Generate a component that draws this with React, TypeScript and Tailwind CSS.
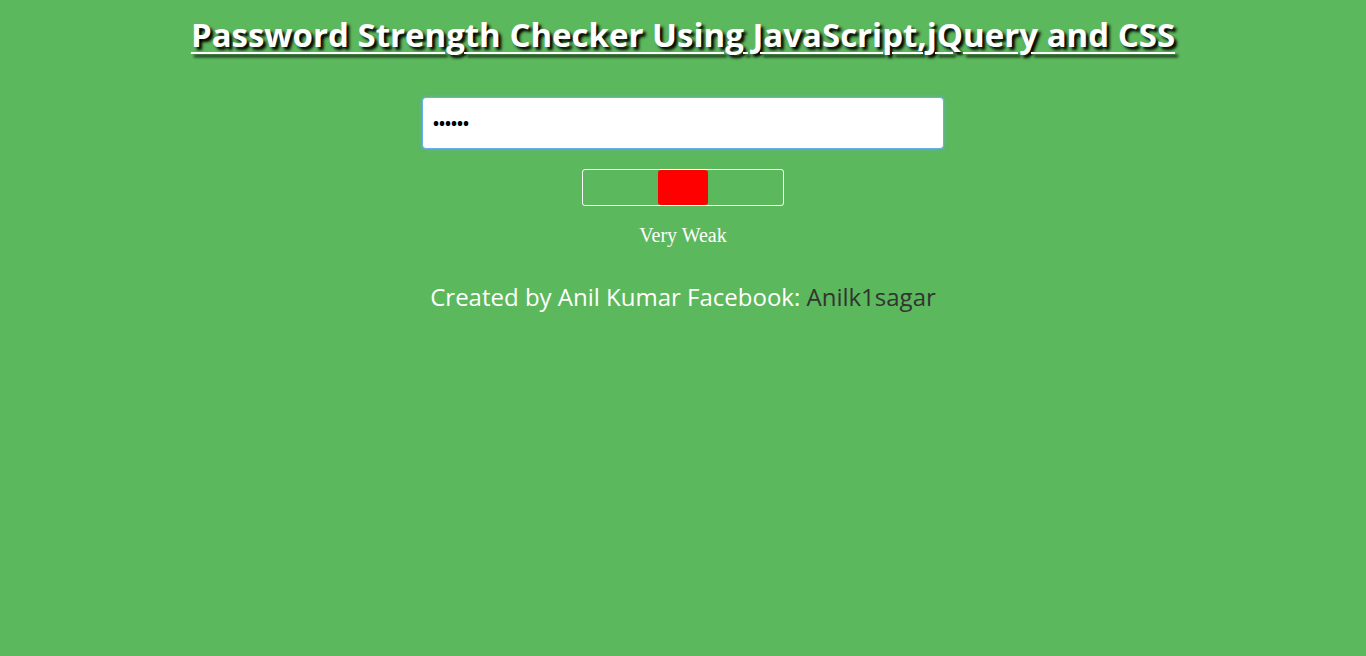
import React, { useState } from 'react';

export default function App() {
  const [pwd, setPwd] = useState('123456');

  return (
    <div className="min-h-screen w-full bg-[#5cb85c] flex flex-col items-center font-['Open_Sans',sans-serif]">
      <h1 className="mt-[13px] text-[33px] leading-[44px] font-bold text-white underline decoration-2 underline-offset-[5px] [text-shadow:3px_3px_3px_#000]">
        Password Strength Checker Using JavaScript,jQuery and CSS
      </h1>

      <input
        type="password"
        value={pwd}
        onChange={e => setPwd(e.target.value)}
        className="mt-[40px] w-[522px] h-[52px] bg-white border border-[#66afe9] rounded-[4px] px-[10px] text-[16px] font-bold text-black outline-none shadow-[0_0_4px_rgba(102,175,233,0.6)]"
      />

      <div className="mt-[20px] w-[202px] h-[37px] border border-white rounded-[3px] flex justify-center">
        <div className="w-[50px] h-full bg-[#ff0000] rounded-[3px]"></div>
      </div>

      <p className="mt-[15px] text-[20px] leading-[28px] text-white font-['Liberation_Serif',serif]">Very Weak</p>

      <p className="mt-[32px] text-[24px] leading-[32px] text-white">
        Created by Anil Kumar Facebook: <span className="text-[#333333]">Anilk1sagar</span>
      </p>
    </div>
  );
}
